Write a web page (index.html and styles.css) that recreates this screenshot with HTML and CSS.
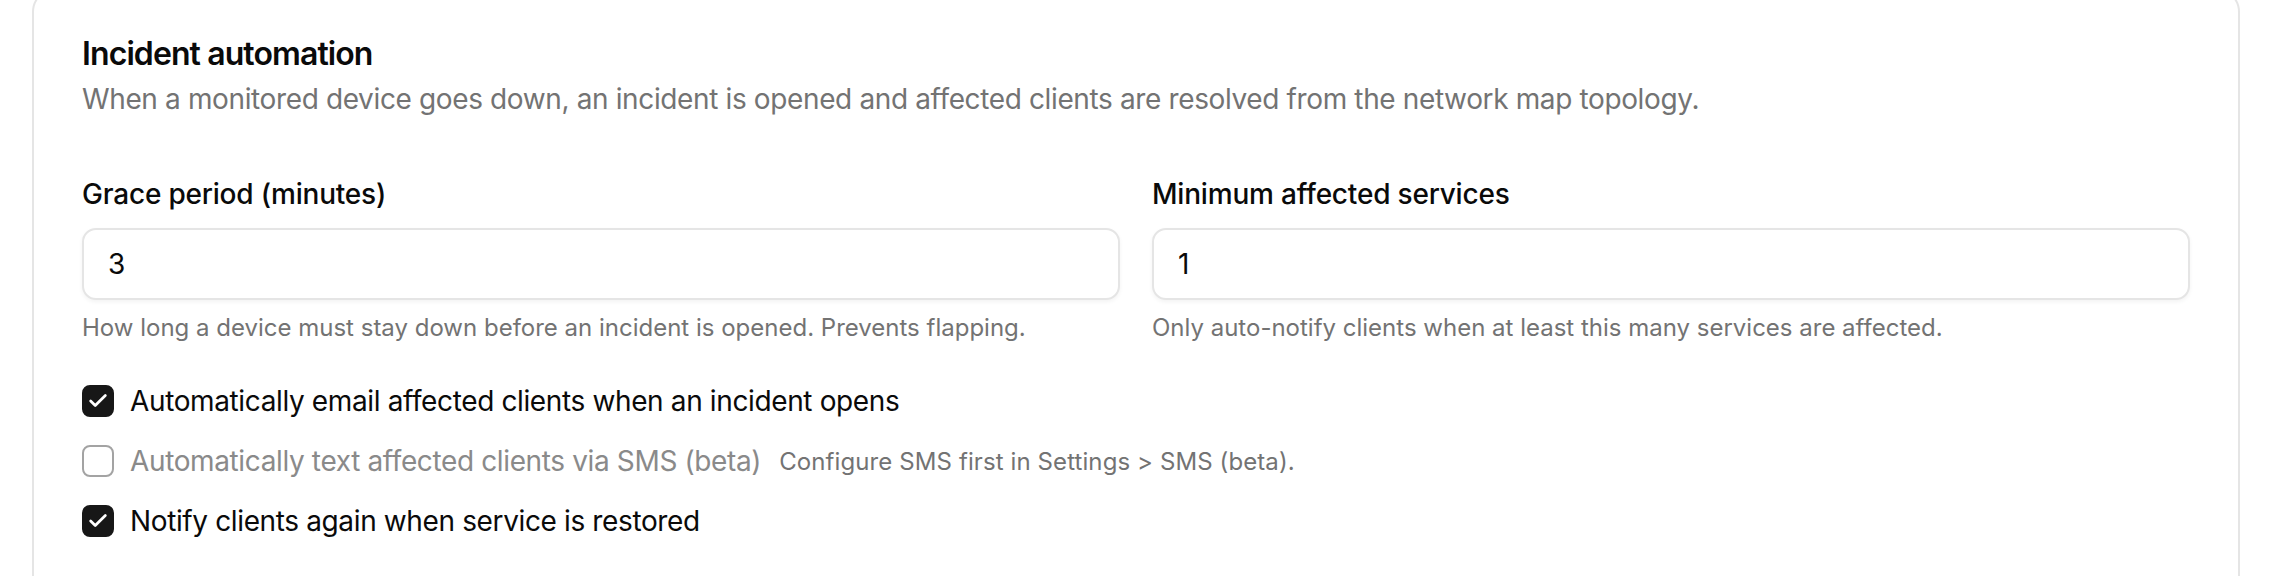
FILE: index.html
```html
<!DOCTYPE html>
<html lang="en">
<head>
    <meta charset="UTF-8">
    <meta name="viewport" content="width=device-width, initial-scale=1.0">
    <title>Incident automation</title>
    <link rel="stylesheet" href="styles.css">
</head>
<body>
    <!-- Incident automation settings card -->
    <div class="card">
        <div class="card-header">
            <h3 class="card-title">Incident automation</h3>
            <p class="card-desc">When a monitored device goes down, an incident is opened and affected clients are resolved from the network map topology.</p>
        </div>

        <div class="field-grid">
            <div class="field">
                <label for="grace">Grace period (minutes)</label>
                <input type="text" id="grace" class="input" value="3">
                <p class="help">How long a device must stay down before an incident is opened. Prevents flapping.</p>
            </div>
            <div class="field">
                <label for="minServices">Minimum affected services</label>
                <input type="text" id="minServices" class="input" value="1">
                <p class="help">Only auto-notify clients when at least this many services are affected.</p>
            </div>
        </div>

        <div class="checks">
            <label class="check-row">
                <span class="checkbox checked">
                    <svg viewBox="0 0 24 24" fill="none" stroke="currentColor" stroke-width="3" stroke-linecap="round" stroke-linejoin="round"><path d="M20 6 9 17l-5-5"/></svg>
                </span>
                <span>Automatically email affected clients when an incident opens</span>
            </label>
            <label class="check-row disabled">
                <span class="checkbox"></span>
                <span>Automatically text affected clients via SMS (beta)</span>
                <span class="hint">Configure SMS first in Settings &gt; SMS (beta).</span>
            </label>
            <label class="check-row">
                <span class="checkbox checked">
                    <svg viewBox="0 0 24 24" fill="none" stroke="currentColor" stroke-width="3" stroke-linecap="round" stroke-linejoin="round"><path d="M20 6 9 17l-5-5"/></svg>
                </span>
                <span>Notify clients again when service is restored</span>
            </label>
        </div>
    </div>
</body>
</html>
```

FILE: styles.css
```css
body {
    margin: 0;
    padding: 0 32px;
    background-color: #fff;
    font-family: Inter, "Noto Sans", sans-serif;
    color: #0a0a0a;
}
.card {
    margin-top: -12px;
    padding: 48px;
    border: 2px solid #e5e5e5;
    border-radius: 24px;
    background-color: #fff;
    height: 700px;
}
.card-title {
    margin: 0;
    font-size: 32px;
    line-height: 32px;
    font-weight: 600;
    letter-spacing: -0.9px;
}
.card-desc {
    margin: 9px 0 0;
    font-size: 28px;
    line-height: 40px;
    color: #737373;
    letter-spacing: -0.37px;
}
.field-grid {
    display: grid;
    grid-template-columns: 1fr 1fr;
    gap: 32px;
    margin-top: 61px;
}
.field label {
    display: block;
    font-size: 28px;
    line-height: 28px;
    font-weight: 500;
    letter-spacing: -0.2px;
}
.input {
    display: block;
    box-sizing: border-box;
    width: 100%;
    height: 72px;
    margin-top: 20px;
    padding: 0 24px;
    border: 2px solid #e5e5e5;
    border-radius: 14px;
    box-shadow: 0 2px 4px rgba(0, 0, 0, 0.05);
    font-family: inherit;
    font-size: 28px;
    color: #0a0a0a;
    outline: none;
}
.help {
    margin: 12px 0 0;
    font-size: 24px;
    line-height: 32px;
    color: #737373;
    letter-spacing: 0;
}
.checks {
    display: flex;
    flex-direction: column;
    gap: 20px;
    margin-top: 37px;
}
.check-row {
    display: flex;
    align-items: center;
    gap: 16px;
    height: 40px;
    font-size: 28px;
    letter-spacing: -0.37px;
}
.checkbox {
    display: flex;
    align-items: center;
    justify-content: center;
    box-sizing: border-box;
    width: 32px;
    height: 32px;
    border: 2px solid #a3a3a3;
    border-radius: 8px;
    background-color: #fff;
    flex-shrink: 0;
}
.checkbox.checked {
    border-color: #171717;
    background-color: #171717;
    color: #fff;
}
.checkbox svg {
    width: 22px;
    height: 22px;
}
.check-row.disabled {
    color: #8a8a8a;
}
.hint {
    margin-left: 2px;
    font-size: 24px;
    color: #737373;
    letter-spacing: 0.1px;
}
```
